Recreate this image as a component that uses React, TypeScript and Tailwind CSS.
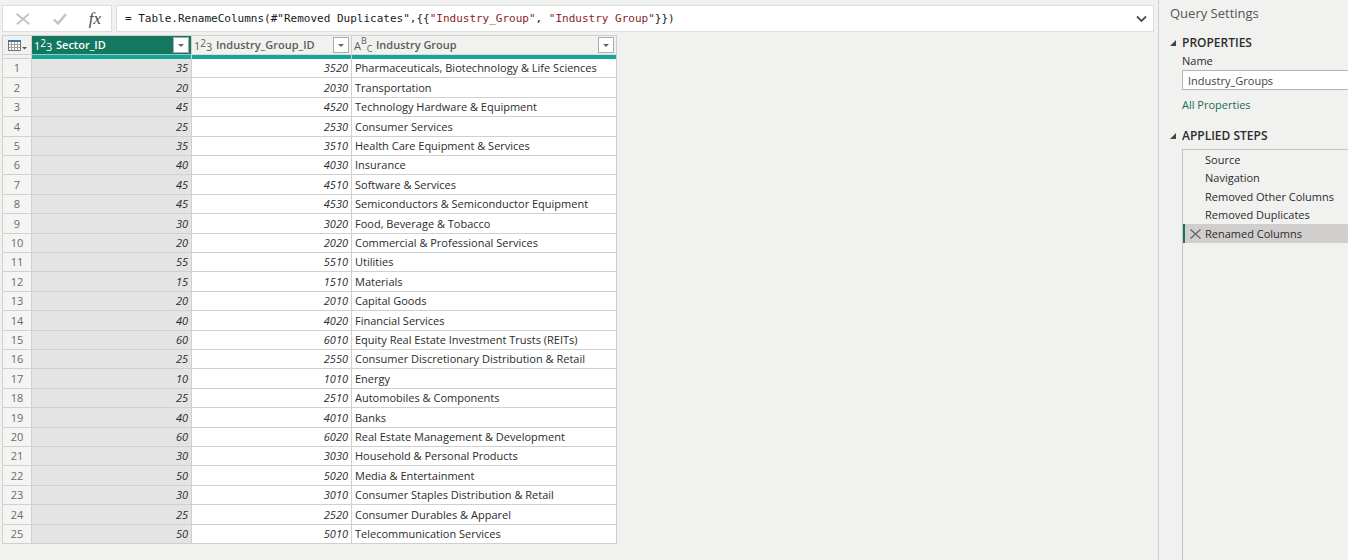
import React from "react";

type Row = [number, number, string];

const rows: Row[] = [
  [35, 3520, "Pharmaceuticals, Biotechnology & Life Sciences"],
  [20, 2030, "Transportation"],
  [45, 4520, "Technology Hardware & Equipment"],
  [25, 2530, "Consumer Services"],
  [35, 3510, "Health Care Equipment & Services"],
  [40, 4030, "Insurance"],
  [45, 4510, "Software & Services"],
  [45, 4530, "Semiconductors & Semiconductor Equipment"],
  [30, 3020, "Food, Beverage & Tobacco"],
  [20, 2020, "Commercial & Professional Services"],
  [55, 5510, "Utilities"],
  [15, 1510, "Materials"],
  [20, 2010, "Capital Goods"],
  [40, 4020, "Financial Services"],
  [60, 6010, "Equity Real Estate Investment Trusts (REITs)"],
  [25, 2550, "Consumer Discretionary Distribution & Retail"],
  [10, 1010, "Energy"],
  [25, 2510, "Automobiles & Components"],
  [40, 4010, "Banks"],
  [60, 6020, "Real Estate Management & Development"],
  [30, 3030, "Household & Personal Products"],
  [50, 5020, "Media & Entertainment"],
  [30, 3010, "Consumer Staples Distribution & Retail"],
  [25, 2520, "Consumer Durables & Apparel"],
  [50, 5010, "Telecommunication Services"],
];

const steps = [
  "Source",
  "Navigation",
  "Removed Other Columns",
  "Removed Duplicates",
  "Renamed Columns",
];

function NumberType() {
  return (
    <span aria-hidden="true" className="flex w-[18px] shrink-0 items-center text-[11px] font-medium leading-3">
      <span className="pt-0.5">1</span>
      <span className="pb-1 text-[10px]">2</span>
      <span className="pt-1">3</span>
    </span>
  );
}

function TextType() {
  return (
    <span aria-hidden="true" className="flex w-[18px] shrink-0 items-center text-[11px] font-medium leading-3">
      <span className="pt-0.5">A</span>
      <span className="pb-2 text-[9px] leading-2">B</span>
      <span className="pt-2 text-[9px] leading-2">C</span>
    </span>
  );
}

function ColumnHead({
  label,
  type,
  selected = false,
}: {
  label: string;
  type: "number" | "text";
  selected?: boolean;
}) {
  return (
    <th scope="col" className="border-r border-[#d0d0d0] p-0 align-top">
      <div
        className={
          selected
            ? "flex h-[18px] items-center gap-1 bg-[#13785f] px-0.5 text-white"
            : "flex h-[18px] items-center gap-1 bg-[#f1f1f0] px-0.5 text-[#5c5c5c]"
        }
      >
        {type === "number" ? <NumberType /> : <TextType />}
        <span className="flex-1 text-left text-[11px] font-semibold leading-4">{label}</span>
        <button
          type="button"
          aria-label={`Filter ${label}`}
          className="flex h-4 w-4 items-center justify-center border border-[#ababab] bg-white"
        >
          <svg width="6" height="3" viewBox="0 0 6 3" aria-hidden="true">
            <path d="M0 0h6L3 3z" fill="#666" />
          </svg>
        </button>
      </div>
      <div className={selected ? "h-px bg-[#8fd0c2]" : "h-px bg-[#d6dcda]"} />
      <div className="h-1 bg-[#16a596]" />
    </th>
  );
}

function Section({ title, children }: { title: string; children: React.ReactNode }) {
  return (
    <section className="grid grid-cols-[12px_minmax(0,1fr)]">
      <svg width="6" height="6" viewBox="0 0 6 6" className="mt-1.5" aria-hidden="true">
        <path d="M6 0v6H0z" fill="#444" />
      </svg>
      <h3 className="text-[12px] font-semibold leading-[18px] text-[#2d2d2d]">{title}</h3>
      <div className="col-start-2">{children}</div>
    </section>
  );
}

export default function App() {
  return (
    <div className="flex min-h-screen bg-[#f1f1f0] font-['Open_Sans','Noto_Sans',sans-serif] text-[#2b2b2b]">
      <main className="min-w-0 flex-1 pl-0.5 pr-1 pt-[5px]">
        <div className="flex h-[27px] gap-1">
          <div className="flex w-[110px] items-center justify-between border border-[#dedede] bg-white pl-3 pr-2.5">
            <button type="button" aria-label="Cancel" className="text-[#c2c2c2]">
              <svg width="16" height="12" viewBox="0 0 16 12" fill="none" stroke="currentColor" strokeWidth="1.8" aria-hidden="true">
                <path d="M1.5 .8l13 10.500M14 .8L2 11.300" />
              </svg>
            </button>
            <button type="button" aria-label="Commit" className="text-[#c2c2c2]">
              <svg width="14" height="12" viewBox="0 0 14 12" fill="none" stroke="currentColor" strokeWidth="2.4" aria-hidden="true">
                <path d="M1 6.500l4 4L13 1" />
              </svg>
            </button>
            <button
              type="button"
              aria-label="Insert step"
              className="font-['Liberation_Serif',serif] text-[17px] italic leading-5 text-[#4a4a4a]"
            >
              fx
            </button>
          </div>
          <div className="flex min-w-0 flex-1 items-center justify-between border border-[#dedede] bg-white pl-2 pr-1.5">
            <code className="whitespace-pre font-['DejaVu_Sans_Mono',monospace] text-[11px] leading-4 text-[#1a1a1a]">
              {'= Table.RenameColumns(#"Removed Duplicates",{{'}
              <span className="text-[#8c1d28]">"Industry_Group"</span>
              {", "}
              <span className="text-[#8c1d28]">"Industry Group"</span>
              {"}})"}
            </code>
            <button type="button" aria-label="Expand formula bar">
              <svg width="11" height="8" viewBox="0 0 11 8" fill="none" stroke="#505050" strokeWidth="1.8" aria-hidden="true">
                <path d="M1 1.500L5.500 6 10 1.500" />
              </svg>
            </button>
          </div>
        </div>

        <table className="mt-[3px] w-[615px] table-fixed border-separate border-spacing-0 border-l border-t border-[#d0d0d0]">
          <colgroup>
            <col className="w-[29px]" />
            <col className="w-40" />
            <col className="w-40" />
            <col />
          </colgroup>
          <thead>
            <tr className="h-[23px]">
              <th className="border-b border-r border-[#d0d0d0] p-0 align-top">
                <button type="button" aria-label="Table options" className="flex h-[19px] w-full items-center border-b border-[#d0d0d0] pl-[5px]">
                  <svg width="20" height="12" viewBox="0 0 20 12" aria-hidden="true">
                    <path d="M.5 1.500h12v10H.5z" fill="#fff" stroke="#707070" />
                    <path d="M0 1h13v2H0z" fill="#3f75b5" />
                    <path d="M1 5.500h11M1 8.500h11M3.500 3v8M6.500 3v8M9.500 3v8" stroke="#a0a0a0" />
                    <path d="M14 8h5l-2.500 2.500z" fill="#555" />
                  </svg>
                </button>
              </th>
              <ColumnHead label="Sector_ID" type="number" selected />
              <ColumnHead label="Industry_Group_ID" type="number" />
              <ColumnHead label="Industry Group" type="text" />
            </tr>
          </thead>
          <tbody className="text-[11px] leading-4 [&_td]:border-b [&_td]:border-r [&_td]:border-[#d0d0d0] [&_td]:py-0">
            {rows.map(([sector, group, name], i) => (
              <tr key={group} className="h-[19px] nth-[5n+2]:h-5 nth-[5n+4]:h-5">
                <th scope="row" className="border-b border-r border-[#d0d0d0] bg-[#f4f4f3] p-0 text-center font-normal text-[#6a6a6a]">
                  {i + 1}
                </th>
                <td className="bg-[#e4e4e4] pr-[3px] text-right italic">{sector}</td>
                <td className="bg-white pr-[3px] text-right italic">{group}</td>
                <td className="whitespace-nowrap bg-white pl-[3px]">{name}</td>
              </tr>
            ))}
          </tbody>
        </table>
      </main>

      <aside className="w-[190px] shrink-0 border-l border-[#cfcfcf] pl-[11px] pt-1">
        <h2 className="text-[13px] leading-[18px] text-[#555]">Query Settings</h2>
        <div className="mt-3">
          <Section title="PROPERTIES">
            <label htmlFor="query-name" className="block text-[11px] leading-[18px]">
              Name
            </label>
            <input
              id="query-name"
              defaultValue="Industry_Groups"
              className="block h-5 w-full border border-r-0 border-[#b4b4b4] bg-white px-[5px] text-[11px] text-[#444]"
            />
            <a href="#properties" className="mt-[5px] block text-[11px] leading-5 text-[#1c6b56]">
              All Properties
            </a>
          </Section>
        </div>
        <div className="mt-3">
          <Section title="APPLIED STEPS">
            <ul className="mt-1 min-h-[calc(100vh-149px)] border-l border-t border-[#c4c4c4] text-[11px]">
              {steps.map((step) => {
                const active = step === "Renamed Columns";
                return (
                  <li
                    key={step}
                    className={
                      active
                        ? "flex h-[19px] items-center border-l-2 border-[#13785f] bg-[#d0cfce]"
                        : "flex h-[19px] items-center border-l-2 border-transparent even:h-[18px]"
                    }
                  >
                    <span className="flex w-5 justify-center">
                      {active && (
                        <button type="button" aria-label="Delete step">
                          <svg width="11" height="10" viewBox="0 0 11 10" fill="none" stroke="#666" strokeWidth="1.3" aria-hidden="true">
                            <path d="M.5 .5l10 9M10.500 .5l-10 9" />
                          </svg>
                        </button>
                      )}
                    </span>
                    <span className="whitespace-nowrap leading-[18px]">{step}</span>
                  </li>
                );
              })}
            </ul>
          </Section>
        </div>
      </aside>
    </div>
  );
}
